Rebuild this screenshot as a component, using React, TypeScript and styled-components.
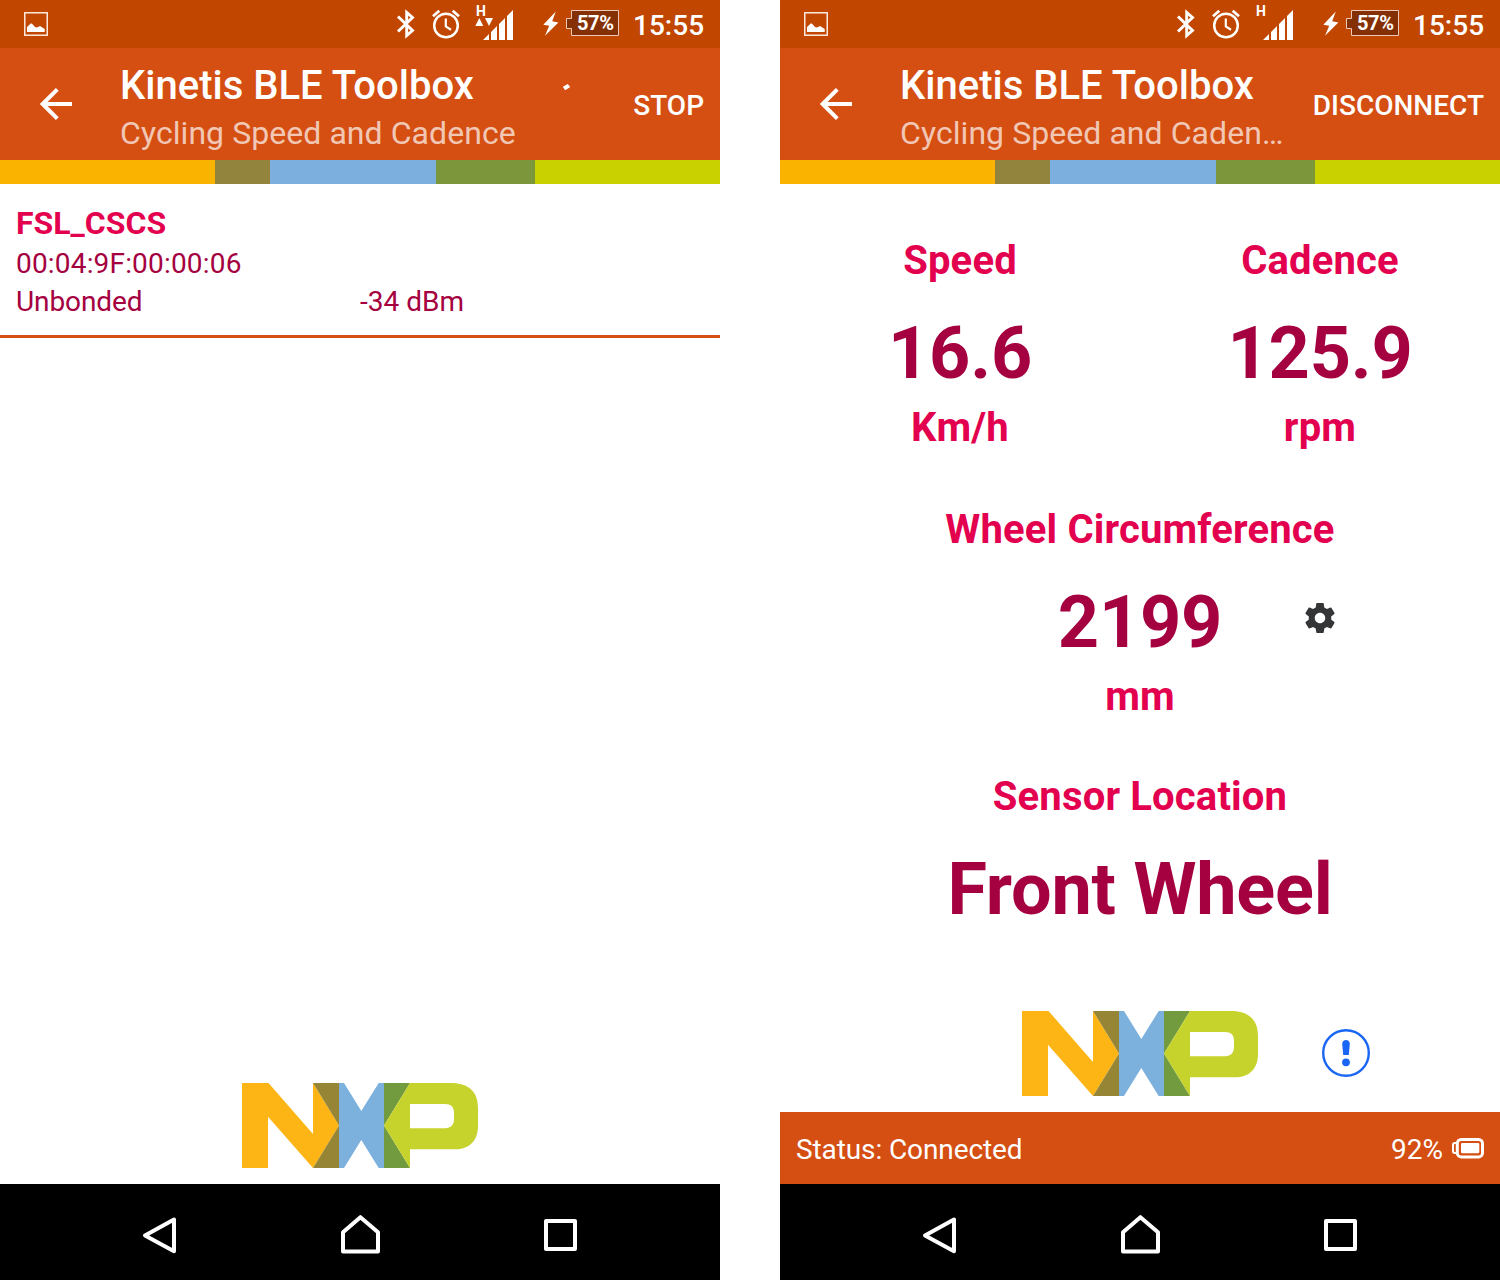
import React from "react";
import styled, { createGlobalStyle } from "styled-components";

const GlobalStyle = createGlobalStyle`
  * { box-sizing: border-box; }
  body { margin: 0; background: #fff; font-family: Roboto, "Liberation Sans", sans-serif; }
  svg { display: block; flex: none; }
`;

const Screens = styled.main`
  display: flex;
  gap: 60px;
  width: 1500px;
  height: 1280px;
  overflow: hidden;
`;

const Phone = styled.section`
  display: flex;
  flex-direction: column;
  width: 720px;
  height: 1280px;
  background: #fff;
`;

const SystemBar = styled.div`
  display: flex;
  align-items: center;
  height: 48px;
  padding: 0 16px 0 24px;
  background: #c14600;
  color: #fff;
`;

const SystemIcons = styled.div`
  display: flex;
  align-items: center;
  margin-left: auto;
`;

const Spacer = styled.span`
  width: 16px;
`;

const Signal = styled.div`
  position: relative;
  width: 40px;
  height: 48px;
  margin: 0 28px 0 15px;
`;

const NetworkType = styled.span`
  position: absolute;
  left: 1px;
  top: 4px;
  font-size: 14px;
  line-height: 15px;
  font-weight: 700;
`;

const Battery = styled.div`
  position: relative;
  width: 54px;
  height: 48px;
  margin: 0 13px 0 7px;
`;

const BatteryLevel = styled.span`
  position: absolute;
  left: 11px;
  top: 12px;
  font-size: 20px;
  line-height: 23px;
  font-weight: 700;
  letter-spacing: -0.4px;
`;

const Clock = styled.span`
  width: 71px;
  font-size: 28px;
  line-height: 33px;
  font-weight: 500;
  padding-top: 3px;
  text-align: right;
`;

const AppBar = styled.header`
  display: flex;
  align-items: center;
  height: 112px;
  padding: 0 16px 0 40px;
  background: #d54e12;
  color: #fff;
`;

const Titles = styled.div`
  flex: 1;
  min-width: 0;
  margin: 7px 0 0 48px;
`;

const Title = styled.h1`
  margin: 0;
  font-size: 40px;
  line-height: 47px;
  font-weight: 500;
  white-space: nowrap;
`;

const Subtitle = styled.div`
  margin-top: 3px;
  font-size: 32px;
  line-height: 42px;
  letter-spacing: 0.06px;
  color: rgba(255, 255, 255, 0.7);
  white-space: nowrap;
`;

const Spinner = styled.svg`
  align-self: flex-start;
  margin: 35px 62px 0 0;
`;

const Action = styled.button`
  padding: 2px 0 0;
  border: 0;
  background: none;
  color: inherit;
  font: 500 28px/33px Roboto, sans-serif;
`;

const Stripe = styled.div`
  display: grid;
  grid-template-columns: 215px 55px 166px 98.5px 1fr;
  height: 24px;
`;

const Band = styled.span<{ $color: string }>`
  background: ${(p) => p.$color};
`;

const Content = styled.div`
  flex: 1;
  display: flex;
  flex-direction: column;
  min-height: 0;
`;

const Device = styled.article`
  display: grid;
  grid-template-columns: 344px 1fr;
  height: 154px;
  padding: 19px 16px 0;
  grid-template-rows: 41px 38px 38px;
  align-items: center;
  border-bottom: 3px solid #d54e12;
  color: #a50040;
  font-size: 28px;
  line-height: 33px;
`;

const DeviceName = styled.strong`
  grid-column: 1 / -1;
  padding-bottom: 2px;
  font-size: 32px;
  line-height: 38px;
  color: #e2004f;
`;

const Address = styled.span`
  grid-column: 1 / -1;
  letter-spacing: 0.18px;
`;

const Bond = styled.span`
  letter-spacing: -0.1px;
`;

const Metrics = styled.div`
  display: grid;
  grid-template-columns: 1fr 1fr;
  padding-top: 53px;
  row-gap: 55px;
`;

const Metric = styled.div<{ $wide?: boolean }>`
  grid-column: ${(p) => (p.$wide ? "1 / -1" : "auto")};
  display: flex;
  flex-direction: column;
  align-items: center;
  text-align: center;
`;

const Label = styled.h2`
  margin: 0;
  font-size: 40px;
  line-height: 47px;
  font-weight: 700;
  letter-spacing: 0.16px;
  color: #e2004f;
`;

const Value = styled.div`
  margin: 28px 0 8px;
  font-size: 72px;
  line-height: 84px;
  font-weight: 700;
  letter-spacing: -0.2px;
  color: #a50040;
  white-space: nowrap;
`;

const SideRow = styled.div`
  display: grid;
  grid-template-columns: 270px 180px 180px 90px;
  align-items: center;
  justify-items: center;
  width: 720px;
  height: 120px;

  & > :first-child { grid-column: 2; }
  & > svg { margin-top: 10px; }
`;

const Location = styled(Metric)`
  margin-top: -2px;
`;

const Brand = styled.div`
  display: grid;
  grid-template-columns: 1fr 236px 1fr;
  align-items: center;
  margin-top: auto;
  padding-bottom: 16px;
`;

const LogoSvg = styled.svg`
  grid-column: 2;
`;

const InfoSvg = styled.svg`
  margin: 0 0 1px 64px;
`;

const StatusBar = styled.footer`
  display: flex;
  align-items: center;
  height: 72px;
  padding: 2px 16px 0;
  background: #d54e12;
  color: #fff;
  font-size: 28px;
  line-height: 33px;
`;

const Status = styled.span`
  letter-spacing: -0.1px;
`;

const Charge = styled.span`
  margin: 0 9px 0 auto;
`;

const NavBar = styled.nav`
  height: 96px;
  display: flex;
  align-items: center;
  justify-content: space-between;
  padding: 7px 140px 0;
  background: #000;
`;

const PictureIcon = () => (
  <svg width="24" height="24" viewBox="0 0 24 24">
    <rect x="0.75" y="0.75" width="22.5" height="22.5" fill="none" stroke="#fbe4d8" strokeWidth="1.6" />
    <path d="M3 20V15L7 11.3L8.3 12L11 15L13 15.6L16 14L20.7 17V20Z" fill="#fff" />
  </svg>
);

const BluetoothIcon = () => (
  <svg width="20" height="30" viewBox="0 0 20 30" fill="none" stroke="#fff" strokeWidth="2.9">
    <path d="M2 7.5L16.5 21.5L10.7 26.5V3.5L16.5 8.5L2 22.5" />
  </svg>
);

const AlarmIcon = () => (
  <svg width="28" height="30" viewBox="0 0 28 30" fill="none" stroke="#fff">
    <circle cx="14" cy="16.5" r="11.8" strokeWidth="2.5" />
    <path d="M13.8 9.5V17.5L19 20.7" strokeWidth="2.2" />
    <path d="M1 7.3L7.3 1.8M27 7.3L20.7 1.8" strokeWidth="2.8" />
  </svg>
);

const SignalIcon = ({ active }: { active: boolean }) => (
  <svg width="40" height="48" viewBox="0 0 40 48" fill="#fff">
    {active && <path d="M0.3 26L4.3 18L8.3 26ZM10 18H18L14 26Z" />}
    <path d="M8 40L14 34V40ZM16 40V32L22 26V40ZM24 40V24L30 18V40ZM32 40V16L38 10V40Z" />
  </svg>
);

const BoltIcon = () => (
  <svg width="16" height="48" viewBox="0 0 16 48" fill="#fff">
    <path d="M12.8 11.6L0.3 24.8L6.2 25.8L2 35.7L15.4 22.5L9.2 21.2Z" />
  </svg>
);

const BatteryIcon = () => (
  <svg width="54" height="48" viewBox="0 0 54 48">
    <path d="M5.5 10.5H52.5V35.5H5.5V28.5H0.5V18.5H5.5Z" fill="#853004" stroke="#ecc9b8" strokeWidth="1" />
  </svg>
);

const BackArrow = () => (
  <svg width="32" height="32" viewBox="0 0 32 32" fill="none" stroke="#fff" strokeWidth="4">
    <path d="M32 16H3M17.3 1.4L2.7 16L17.3 30.6" />
  </svg>
);

const GearIcon = () => (
  <svg width="36" height="36" viewBox="0 0 24 24" fill="#333537">
    <path d="M19.43 12.98c.04-.32.07-.64.07-.98s-.03-.66-.07-.98l2.11-1.65c.19-.15.24-.42.12-.64l-2-3.46c-.12-.22-.39-.3-.61-.22l-2.49 1c-.52-.4-1.08-.73-1.69-.98l-.38-2.65C14.46 2.18 14.25 2 14 2h-4c-.25 0-.46.18-.49.42l-.38 2.65c-.61.25-1.17.59-1.69.98l-2.49-1c-.23-.09-.49 0-.61.22l-2 3.46c-.13.22-.07.49.12.64l2.11 1.65c-.04.32-.07.65-.07.98s.03.66.07.98l-2.11 1.65c-.19.15-.24.42-.12.64l2 3.46c.12.22.39.3.61.22l2.49-1c.52.4 1.08.73 1.69.98l.38 2.65c.03.24.24.42.49.42h4c.25 0 .46-.18.49-.42l.38-2.65c.61-.25 1.17-.59 1.69-.98l2.49 1c.23.09.49 0 .61-.22l2-3.46c.12-.22.07-.49-.12-.64l-2.11-1.65zM12 15.5c-1.93 0-3.5-1.57-3.5-3.5s1.57-3.5 3.5-3.5 3.5 1.57 3.5 3.5-1.57 3.5-3.5 3.5z" />
  </svg>
);

const NxpLogo = () => (
  <LogoSvg width="236" height="85" viewBox="0 0 236 85">
    <path d="M0 0H26.5L71 51V0L97 42.5L71 85L26 33.8V85H0Z" fill="#fdb515" />
    <path d="M71 0H97V42.5ZM97 42.5V85H71Z" fill="#958535" />
    <path d="M97 0H102L119.3 28L136.7 0H142V85H136.7L119.3 57L102 85H97Z" fill="#7cb1de" />
    <path d="M142 0H168L142 42.5ZM142 42.5L168 85H142Z" fill="#729a3f" />
    <path fillRule="evenodd" d="M168 0H209C227 0 236 9 236 25V43C236 58 227 66.3 213 66.3H168V85L142 42.5ZM168 21V45.3H203C209 45.3 212 41.5 212 36V30C212 24 209 21 203 21Z" fill="#c7d32d" />
  </LogoSvg>
);

const InfoIcon = () => (
  <InfoSvg width="48" height="48" viewBox="0 0 48 48" fill="#1a66f5">
    <circle cx="24" cy="24" r="22.8" fill="none" stroke="#1a66f5" strokeWidth="2.4" />
    <path d="M20.2 15C20.2 9.6 27.8 9.6 27.8 15L26.8 26H21.2Z" />
    <circle cx="24" cy="33.3" r="3.9" />
  </InfoSvg>
);

const SensorBatterySvg = styled.svg`
  margin-bottom: 2px;
`;

const SensorBattery = () => (
  <SensorBatterySvg width="32" height="22" viewBox="0 0 32 22" fill="none" stroke="#fff">
    <rect x="5.3" y="2.5" width="25.2" height="17.4" rx="4" strokeWidth="3" />
    <rect x="9" y="6" width="18.3" height="10.3" rx="1.3" fill="#fff" stroke="none" />
    <path d="M4.5 6H2.7Q1 6 1 8V14Q1 16 2.7 16H4.5" strokeWidth="2" />
  </SensorBatterySvg>
);

const NavBack = () => (
  <svg width="40" height="44" viewBox="0 0 40 44" fill="none" stroke="#fff" strokeWidth="4" strokeLinejoin="round">
    <path d="M34 5.5V37.2L5 21.5Z" />
  </svg>
);

const NavHome = () => (
  <svg width="40" height="44" viewBox="0 0 40 44" fill="none" stroke="#fff" strokeWidth="4" strokeLinejoin="round">
    <path d="M3 37.5V18.3L20.4 3.2L38 18.3V37.5Z" />
  </svg>
);

const NavRecent = () => (
  <svg width="40" height="44" viewBox="0 0 40 44" fill="none" stroke="#fff" strokeWidth="4" strokeLinejoin="round">
    <rect x="6" y="7" width="29" height="28" />
  </svg>
);

const BANDS = ["#fab400", "#92833d", "#7dafde", "#7c963c", "#c9d200"];

type TopProps = { active?: boolean; subtitle: string; action: string; scanning?: boolean };

function Top({ active = false, subtitle, action, scanning }: TopProps) {
  return (
    <>
      <SystemBar>
        <PictureIcon />
        <SystemIcons>
          <BluetoothIcon />
          <Spacer />
          <AlarmIcon />
          <Signal>
            <SignalIcon active={active} />
            <NetworkType>H</NetworkType>
          </Signal>
          <BoltIcon />
          <Battery>
            <BatteryIcon />
            <BatteryLevel>57%</BatteryLevel>
          </Battery>
          <Clock>15:55</Clock>
        </SystemIcons>
      </SystemBar>
      <AppBar>
        <BackArrow />
        <Titles>
          <Title>Kinetis BLE Toolbox</Title>
          <Subtitle>{subtitle}</Subtitle>
        </Titles>
        {scanning && (
          <Spinner width="9" height="8" viewBox="0 0 9 8">
            <path d="M0.8 3.8L5.8 1L8.2 4L3.2 7.2Z" fill="#fff" />
          </Spinner>
        )}
        <Action>{action}</Action>
      </AppBar>
      <Stripe>
        {BANDS.map((color) => (
          <Band key={color} $color={color} />
        ))}
      </Stripe>
    </>
  );
}

function Navigation() {
  return (
    <NavBar>
      <NavBack />
      <NavHome />
      <NavRecent />
    </NavBar>
  );
}

export default function App() {
  return (
    <>
      <GlobalStyle />
      <Screens>
        <Phone>
          <Top active scanning subtitle="Cycling Speed and Cadence" action="STOP" />
          <Content>
            <Device>
              <DeviceName>FSL_CSCS</DeviceName>
              <Address>00:04:9F:00:00:06</Address>
              <Bond>Unbonded</Bond>
              <span>-34 dBm</span>
            </Device>
            <Brand>
              <NxpLogo />
            </Brand>
          </Content>
          <Navigation />
        </Phone>
        <Phone>
          <Top subtitle="Cycling Speed and Caden…" action="DISCONNECT" />
          <Content>
            <Metrics>
              <Metric>
                <Label>Speed</Label>
                <Value>16.6</Value>
                <Label>Km/h</Label>
              </Metric>
              <Metric>
                <Label>Cadence</Label>
                <Value>125.9</Value>
                <Label>rpm</Label>
              </Metric>
              <Metric $wide>
                <Label>Wheel Circumference</Label>
                <SideRow>
                  <Value>2199</Value>
                  <GearIcon />
                </SideRow>
                <Label>mm</Label>
              </Metric>
              <Location $wide>
                <Label>Sensor Location</Label>
                <Value>Front Wheel</Value>
              </Location>
            </Metrics>
            <Brand>
              <NxpLogo />
              <InfoIcon />
            </Brand>
          </Content>
          <StatusBar>
            <Status>Status: Connected</Status>
            <Charge>92%</Charge>
            <SensorBattery />
          </StatusBar>
          <Navigation />
        </Phone>
      </Screens>
    </>
  );
}
